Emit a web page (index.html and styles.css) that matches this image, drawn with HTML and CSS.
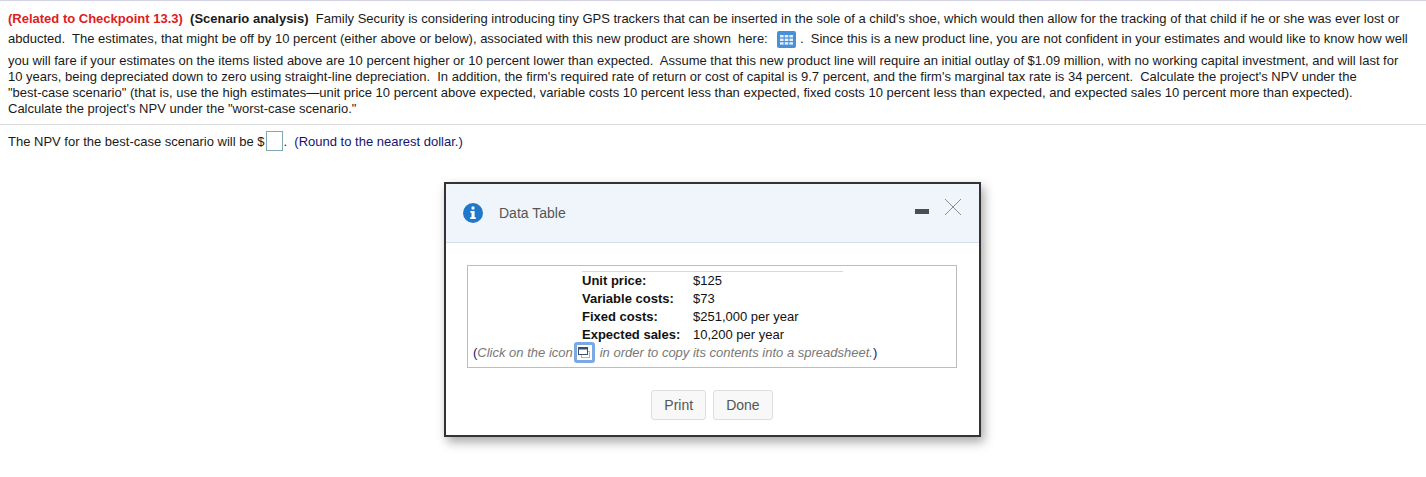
FILE: index.html
```html
<!DOCTYPE html>
<html lang="en">
<head>
<meta charset="utf-8">
<title>Data Table</title>
<link rel="stylesheet" href="styles.css">
</head>
<body>
<main class="question">
  <div class="lead">
    <div class="lead-line"><span class="related">(Related to Checkpoint 13.3)</span>&nbsp; <b>(Scenario analysis)</b>&nbsp; Family Security is considering introducing tiny GPS trackers that can be inserted in the sole of a child's shoe, which would then allow for the tracking of that child if he or she was ever lost or</div>
    <div class="lead-line">abducted.&nbsp; The estimates, that might be off by 10 percent (either above or below), associated with this new product are shown&nbsp; here:&nbsp;
      <svg class="grid-icon" width="19" height="17" viewBox="0 0 19 17"><rect width="19" height="17" rx="2" fill="#4a90d9"/><g fill="#e4effa"><rect x="3" y="4" width="3.6" height="2.4"/><rect x="7.7" y="4" width="3.6" height="2.4"/><rect x="12.4" y="4" width="3.6" height="2.4"/><rect x="3" y="7.6" width="3.6" height="2.4"/><rect x="7.7" y="7.6" width="3.6" height="2.4"/><rect x="12.4" y="7.6" width="3.6" height="2.4"/><rect x="3" y="11.2" width="3.6" height="2.4"/><rect x="7.7" y="11.2" width="3.6" height="2.4"/><rect x="12.4" y="11.2" width="3.6" height="2.4"/></g></svg><span class="after-icon">.&nbsp; Since this is a new product line, you are not confident in your estimates and would like to know how well</span></div>
  </div>
  <div class="body-text">
    <div>you will fare if your estimates on the items listed above are 10 percent higher or 10 percent lower than expected.&nbsp; Assume that this new product line will require an initial outlay of $1.09 million, with no working capital investment, and will last for</div>
    <div>10 years, being depreciated down to zero using straight-line depreciation.&nbsp; In addition, the firm's required rate of return or cost of capital is 9.7 percent, and the firm's marginal tax rate is 34 percent.&nbsp; Calculate the project's NPV under the</div>
    <div>"best-case scenario" (that is, use the high estimates—unit price 10 percent above expected, variable costs 10 percent less than expected, fixed costs 10 percent less than expected, and expected sales 10 percent more than expected).</div>
    <div>Calculate the project's NPV under the "worst-case scenario."</div>
  </div>
  <div class="answer">The NPV for the best-case scenario will be $<span class="answer-box"></span>.&nbsp; <span class="hint">(Round to the nearest dollar.)</span></div>
</main>

<section class="dialog">
  <header class="dialog-head">
    <svg class="info-icon" width="20" height="20" viewBox="0 0 20 20"><circle cx="10" cy="10" r="10" fill="#1f78c8"/><path fill="#fff" d="M8.6 3.6h2.8v2.8H8.6zM7.4 8h4.2v6.2h1.2v1.8H7.2v-1.8h1.3V9.8H7.4z"/></svg>
    <span class="dialog-title">Data Table</span>
    <span class="minimize"></span>
    <svg class="close-icon" width="18" height="18" viewBox="0 0 18 18"><path d="M1 1l16 16M17 1L1 17" stroke="#8a8f96" stroke-width="1" fill="none"/></svg>
  </header>
  <div class="dialog-body">
    <div class="table-frame">
      <div class="data-wrap">
        <div class="data-table">
          <b>Unit price:</b><span>$125</span>
          <b>Variable costs:</b><span>$73</span>
          <b>Fixed costs:</b><span>$251,000 per year</span>
          <b>Expected sales:</b><span>10,200 per year</span>
        </div>
      </div>
      <div class="copy-note"><span class="paren">(</span><i>Click on the icon</i><span class="copy-icon"><svg width="12" height="11" viewBox="0 0 12 11"><rect x="3.5" y="4.5" width="8" height="6" fill="#fff" stroke="#a9b4c4"/><rect x="0.5" y="0.5" width="9" height="7" fill="#fff" stroke="#39506e"/><rect x="0.5" y="0.5" width="9" height="2" fill="#39506e"/></svg></span><i>in order to copy its contents into a spreadsheet.</i><span class="paren">)</span></div>
    </div>
    <div class="actions">
      <button class="btn" type="button">Print</button>
      <button class="btn" type="button">Done</button>
    </div>
  </div>
</section>
</body>
</html>
```
FILE: styles.css
```css
html, body {
  margin: 0;
  padding: 0;
  background: #fff;
}
body {
  width: 1426px;
  height: 477px;
  overflow: hidden;
  font-family: "Liberation Sans", Arial, sans-serif;
  font-size: 13px;
  color: #1a1a1a;
}
.question {
  border-top: 1px solid #d3d3e3;
  padding-top: 8px;
}
.lead, .body-text, .answer {
  padding-left: 8px;
  white-space: nowrap;
}
.lead-line {
  height: 20px;
  line-height: 20px;
}
.related {
  color: #e02020;
  font-weight: bold;
}
.grid-icon {
  vertical-align: -5px;
  margin-left: 2px;
}
.after-icon {
  margin-left: 4px;
}
.body-text {
  margin-top: 4px;
  line-height: 16px;
  padding-bottom: 7px;
  border-bottom: 1px solid #d9d9d9;
}
.answer {
  display: flex;
  align-items: center;
  height: 24px;
  margin-top: 4px;
  white-space: pre;
}
.answer-box {
  width: 15px;
  height: 18px;
  border: 1px solid #7fa8b8;
  margin: 0 1px;
}
.hint {
  color: #14146e;
}
.dialog {
  position: absolute;
  left: 444px;
  top: 182px;
  width: 533px;
  height: 251px;
  border: 2px solid #333;
  background: #fff;
  box-shadow: 3px 5px 10px rgba(0, 0, 0, 0.35);
}
.dialog-head {
  display: flex;
  align-items: center;
  height: 58px;
  padding-left: 17px;
  background: #f0f5fc;
  border-bottom: 1px solid #d6e0ea;
}
.info-icon {
  flex: none;
}
.dialog-title {
  margin-left: 16px;
  font-size: 14px;
  color: #555;
  flex: 1;
}
.minimize {
  width: 14px;
  height: 5px;
  background: #4a4d52;
  margin-right: 15px;
  margin-top: -4px;
}
.close-icon {
  margin-right: 17px;
  margin-top: -13px;
}
.dialog-body {
  padding: 22px 22px 0 21px;
}
.table-frame {
  border: 1px solid #bdbdbd;
  height: 103px;
  padding-left: 5px;
  box-sizing: border-box;
}
.data-wrap {
  margin-left: 109px;
  margin-top: 5px;
  width: 261px;
  border-top: 1px solid #c8dcea;
}
.data-table {
  display: grid;
  grid-template-columns: 111px 1fr;
  grid-auto-rows: 18px;
  line-height: 18px;
  color: #111;
}
.copy-note {
  display: flex;
  align-items: center;
  height: 18px;
  margin-top: -1px;
  color: #777;
  white-space: pre;
}
.paren {
  color: #14146e;
}
.copy-icon {
  display: flex;
  align-items: center;
  justify-content: center;
  width: 21px;
  height: 21px;
  box-sizing: border-box;
  border: 3px solid #7aa9e4;
  border-radius: 3px;
  margin: 0 5px 0 1px;
}
.actions {
  display: flex;
  justify-content: center;
  gap: 7px;
  margin-top: 22px;
}
.btn {
  height: 30px;
  padding: 0 12px;
  font: 14px "Liberation Sans", Arial, sans-serif;
  color: #555;
  background: #f8f8f8;
  border: 1px solid #dedede;
  border-radius: 3px;
}
```
